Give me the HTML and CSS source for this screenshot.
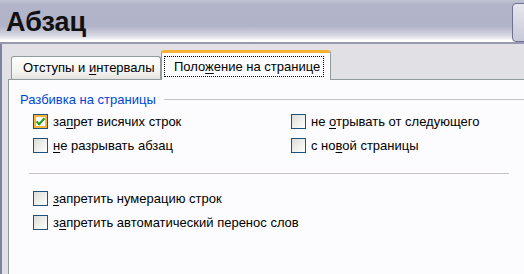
FILE: index.html
```html
<!DOCTYPE html>
<html lang="ru">
<head>
  <meta charset="utf-8">
  <title>Абзац</title>
  <link rel="stylesheet" href="styles.css">
</head>
<body>
  <div class="titlebar">
    <h1 class="title">Абзац</h1>
    <div class="title-btn"></div>
  </div>

  <div class="dialog">
    <div class="tabs">
      <div class="tab">Отступы и <u>и</u>нтервалы</div>
      <div class="tab tab-active">
        <span class="focus">Поло<u>ж</u>ение на странице</span>
      </div>
    </div>

    <div class="panel">
      <div class="group-title">
        <span>Разбивка на страницы</span>
        <span class="group-line"></span>
      </div>

      <div class="options">
        <label class="option">
          <span class="box box-checked">
            <svg width="11" height="11" viewBox="0 0 11 11"><path d="M1.5 5.5 L4.2 8.2 L9.5 2.2" fill="none" stroke="#21a121" stroke-width="2.2"/></svg>
          </span>
          <span>за<u>п</u>рет висячих строк</span>
        </label>
        <label class="option">
          <span class="box"></span>
          <span>не <u>о</u>трывать от следующего</span>
        </label>
        <label class="option">
          <span class="box"></span>
          <span><u>н</u>е разрывать абзац</span>
        </label>
        <label class="option">
          <span class="box"></span>
          <span>с но<u>в</u>ой страницы</span>
        </label>
      </div>

      <div class="separator"></div>

      <div class="options options-single">
        <label class="option">
          <span class="box"></span>
          <span><u>з</u>апретить нумерацию строк</span>
        </label>
        <label class="option">
          <span class="box"></span>
          <span>з<u>а</u>претить автоматический перенос слов</span>
        </label>
      </div>
    </div>
  </div>
</body>
</html>
```

FILE: styles.css
```css
body {
  margin: 0;
  width: 524px;
  height: 274px;
  overflow: hidden;
  background-color: #e1e0e4;
  font-family: "Liberation Sans", Arial, sans-serif;
  font-size: 13px;
  color: #000000;
}

.titlebar {
  display: flex;
  justify-content: space-between;
  height: 42px;
  background: linear-gradient(to bottom, #c3c5d5 0, #b2b4c9 10%, #b1b3c8 62%, #d8d9e3 85%, #ffffff 97%);
  border-bottom: 2px solid #9799b1;
  overflow: hidden;
}

.title {
  margin: 0;
  padding: 2px 0 0 6px;
  font-size: 27px;
  line-height: 40px;
  font-weight: bold;
  color: #111111;
}

.title-btn {
  width: 20px;
  height: 37px;
  margin-top: 3px;
  margin-right: -10px;
  border: 1px solid #6e7292;
  border-radius: 4px;
  background: linear-gradient(to bottom, #e6e6ee, #c9cad9);
}

.dialog {
  border-left: 2px solid #7f82a0;
  padding: 6px 0 0 6px;
  height: 224px;
  overflow: hidden;
}

.tabs {
  display: flex;
  align-items: flex-end;
  margin-left: 3px;
}

.tab {
  box-sizing: border-box;
  width: 150px;
  height: 23px;
  line-height: 22px;
  padding-left: 11px;
  border: 1px solid #919b9c;
  border-bottom: none;
  border-radius: 3px 3px 0 0;
  background: linear-gradient(to bottom, #fefefe, #f2f2f0 70%, #e4e3de);
}

.tab u,
.option u {
  text-decoration: underline;
  text-underline-offset: 2px;
}

.tab-active {
  position: relative;
  width: 170px;
  height: 30px;
  margin-bottom: -1px;
  padding: 3px 0 0 2px;
  border-top: 3px solid #f7b135;
  border-radius: 3px 3px 0 0;
  background: #fcfcfe;
}

.focus {
  display: block;
  box-sizing: border-box;
  width: 160px;
  height: 21px;
  line-height: 19px;
  padding-left: 9px;
  border: 1px dotted #000000;
}

.panel {
  height: 200px;
  margin-right: -20px;
  padding: 11px 0 0 11px;
  border-top: 1px solid #919b9c;
  border-left: 1px solid #919b9c;
  background-color: #fcfcfe;
}

.group-title {
  display: flex;
  align-items: center;
  gap: 8px;
  height: 16px;
  color: #0046d5;
}

.group-line {
  flex: 1;
  border-top: 1px solid #c3c3c3;
}

.options {
  display: grid;
  grid-template-columns: 258px auto;
  margin: 2px 0 0 13px;
}

.options-single {
  grid-template-columns: auto;
}

.option {
  display: flex;
  align-items: center;
  height: 24px;
}

.box {
  box-sizing: border-box;
  display: flex;
  align-items: center;
  justify-content: center;
  width: 15px;
  height: 15px;
  margin-right: 5px;
  border: 1px solid #1c5180;
  background: linear-gradient(135deg, #dcdcd6, #ffffff);
}

.box-checked {
  border: 1px solid #1c5180;
  box-shadow: inset 0 0 0 2px #f8b33b;
  background: #ffffff;
}

.separator {
  width: 480px;
  margin: 16px 0 12px 9px;
  border-top: 1px solid #c6c0c6;
}
```
